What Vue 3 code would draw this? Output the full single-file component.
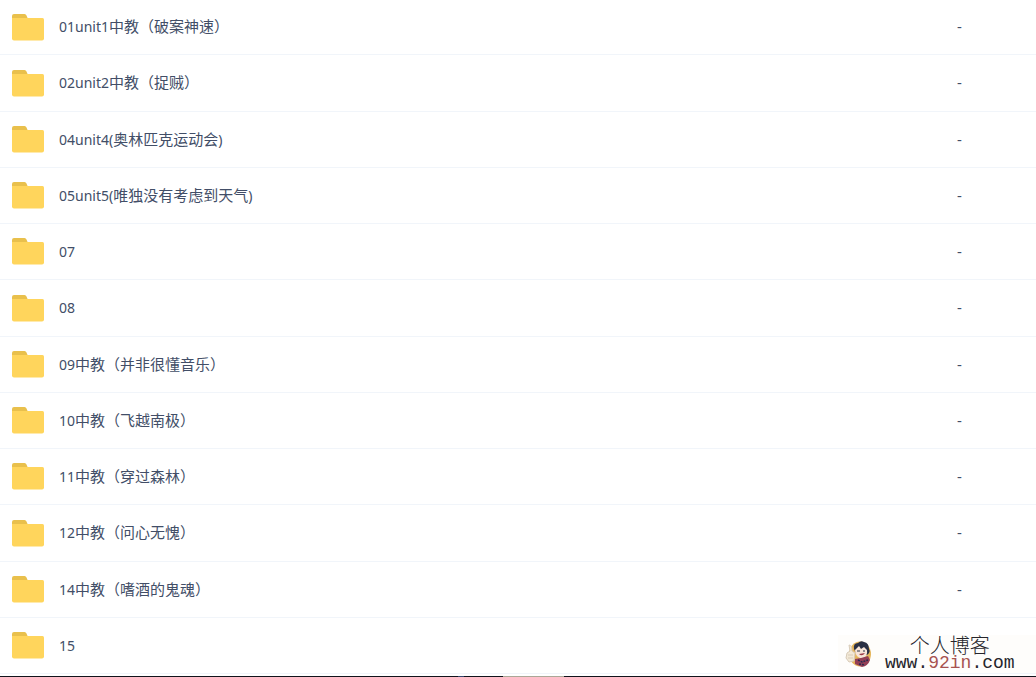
<script setup>
const files = [
  { latin: '01unit1', name: '中教（破案神速）' },
  { latin: '02unit2', name: '中教（捉贼）' },
  { latin: '04unit4(', name: '奥林匹克运动会', end: ')' },
  { latin: '05unit5(', name: '唯独没有考虑到天气', end: ')' },
  { latin: '07' },
  { latin: '08' },
  { latin: '09', name: '中教（并非很懂音乐）' },
  { latin: '10', name: '中教（飞越南极）' },
  { latin: '11', name: '中教（穿过森林）' },
  { latin: '12', name: '中教（问心无愧）' },
  { latin: '14', name: '中教（嗜酒的鬼魂）' },
  { latin: '15' },
]
</script>

<template>
  <main class="page">
    <table class="files">
      <tbody>
        <tr v-for="file in files" :key="file.latin">
          <td class="name">
            <a href="#" class="link">
              <svg class="folder" viewBox="0 0 32 27" aria-hidden="true">
                <path d="M0 8V2Q0 0 2 0H12.5Q14 0 14.5 1.5L16 5V8Z" fill="#e9c04c" />
                <path d="M0 4H30.5Q32 4 32 5.5V24.5Q32 26.5 30 26.5H2Q0 26.5 0 24.5Z" fill="#ffd55c" />
              </svg>
              <span class="label"><span class="latin">{{ file.latin }}</span>{{ file.name }}<span class="latin">{{ file.end }}</span></span>
            </a>
          </td>
          <td class="size">-</td>
        </tr>
      </tbody>
    </table>
    <footer class="bar"><span class="blue"></span><span class="task"></span></footer>
    <aside class="mark">
      <svg class="avatar" viewBox="0 0 28 28" aria-hidden="true">
        <ellipse cx="15" cy="14" rx="11" ry="12.5" fill="#e5b55b" />
        <path d="M9 9Q8 3 13 3Q16 0 19 2Q24 3 24 9Q26 12 22 15L11 13Z" fill="#2a3044" />
        <path d="M10 10L14 6L16 9L19 7L22 10Q23 17 17 18.5Q10 17 10 10Z" fill="#f8e5d8" />
        <path d="M12 11H15M18 11H20" stroke="#263044" />
        <path d="M14 14Q17 17 20 13Z" fill="#9c3943" />
        <path d="M10 19L16 18L23 16L25 20Q23 26 17 27L10 24Z" fill="#943f55" />
        <path d="M13 20L17 22L23 20M14 24L20 25" stroke="#292a50" stroke-width="1.5" stroke-dasharray="2 1" fill="none" />
        <path d="M4 5Q7 5 7 11L10 13L9 21L4 22L1 18L2 13L5 11Z" fill="#f3e9d6" stroke="#d8cbb8" />
        <path d="M3 15H8M3 18H8" stroke="#d8cbb8" />
      </svg>
      <div class="words">
        <div class="title">个人博客</div>
        <div class="url">www.<span>92in</span>.com</div>
      </div>
    </aside>
  </main>
</template>

<style>
body {
  background: #fff;
}
</style>

<style scoped>
.page {
  position: relative;
  overflow: hidden;
  color: #424e67;
  font: 15px/20px "Noto Sans", "Noto Sans CJK SC", sans-serif;
}
.files {
  width: 100%;
  border-collapse: separate;
  border-spacing: 0;
}
td {
  box-sizing: border-box;
  height: 56px;
  padding: 0;
  border-bottom: 1px solid #f1f5fa;
  vertical-align: middle;
}
tr:nth-child(4n + 2) td {
  height: 57px;
}
tr:first-child td {
  height: 55px;
}
.name {
  padding-left: 12px;
}
.link {
  display: flex;
  align-items: center;
  gap: 15px;
  color: inherit;
  text-decoration: none;
}
.folder {
  width: 32px;
  height: 27px;
}
.label {
  padding-bottom: 1px;
  font-family: "Noto Sans CJK SC", sans-serif;
}
.latin {
  font: 14px/20px "Noto Sans", sans-serif;
}
td.size {
  width: 79px;
  padding-bottom: 2px;
}
.bar {
  display: flex;
  height: 1px;
  margin-top: 2px;
  background: #11131b;
}
.blue {
  width: 6px;
  margin-left: 458px;
  background: #34446d;
}
.task {
  width: 61px;
  margin-left: 39px;
  background: #aaa797;
}
.mark {
  position: absolute;
  right: 0;
  bottom: 4px;
  display: flex;
  align-items: center;
  box-sizing: border-box;
  width: 198px;
  height: 38px;
  padding-left: 7px;
  background: #fefdfb;
  color: #25252b;
}
.avatar {
  width: 28px;
  height: 28px;
}
.words {
  margin-left: 12px;
  text-align: center;
}
.title {
  font: 300 20px/18px "Noto Sans CJK SC", sans-serif;
}
.url {
  font: 18px/18px "Liberation Mono", monospace;
}
.url span {
  color: #a75350;
}
</style>
